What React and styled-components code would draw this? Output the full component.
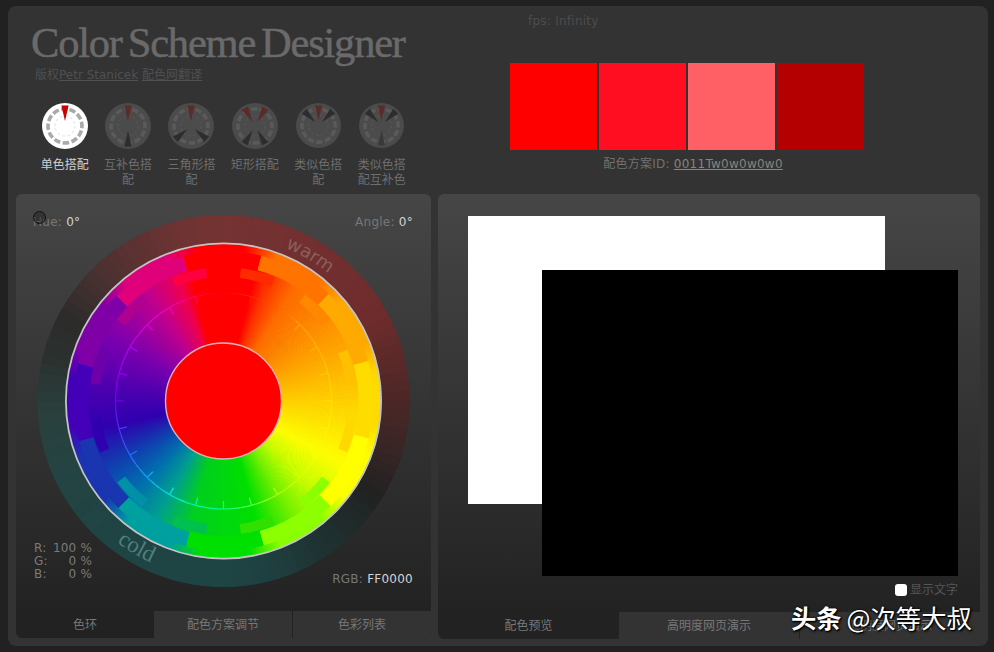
import React from "react";
import styled, { createGlobalStyle } from "styled-components";

const SANS = `"DejaVu Sans", "Noto Sans CJK SC", sans-serif`;

const Global = createGlobalStyle`
  html, body { margin: 0; padding: 0; background: #212121; }
  body { font-family: ${SANS}; font-size: 12px; }
  * { box-sizing: border-box; }
`;

const Frame = styled.div`
  width: 980px;
  height: 640px;
  margin: 6px 0 0 8px;
  background: #333;
  border-radius: 8px;
  display: flex;
  flex-direction: column;
  overflow: hidden;
`;
const Header = styled.header`
  height: 188px;
  display: flex;
  flex: none;
`;
const Brand = styled.div`
  width: 502px;
  padding: 14px 0 0 23px;
`;
const Title = styled.h1`
  margin: 0;
  font: 400 42.5px/46px "Liberation Serif", serif;
  letter-spacing: -1.2px;
  word-spacing: -3.5px;
  color: #6a6a6a;
  -webkit-text-stroke: 0.5px #6a6a6a;
  white-space: nowrap;
`;
const Credit = styled.div`
  margin: 1px 0 0 4px;
  line-height: 16px;
  color: #505050;
  white-space: nowrap;
`;
const CreditLink = styled.a`
  color: #505050;
  text-decoration: underline;
`;
const Schemes = styled.div`
  display: flex;
  margin: 20px 0 0 2px;
`;
const SchemeItem = styled.div`
  width: 63.4px;
  display: flex;
  flex-direction: column;
  align-items: center;
  color: ${(p) => (p.$active ? "#d0d0d0" : "#6e6e6e")};
`;
const SchemeLabel = styled.div`
  width: 50px;
  margin-top: ${(p) => (p.$small ? 10 : 9)}px;
  text-align: center;
  line-height: 15px;
`;
const Palette = styled.div`
  position: relative;
  flex: 1;
  padding-top: 57px;
`;
const Fps = styled.div`
  position: absolute;
  left: 18px;
  top: 8px;
  color: #4c4c4c;
  letter-spacing: 0.25px;
`;
const Swatches = styled.div`
  display: flex;
  gap: 2px;
`;
const Swatch = styled.div`
  width: 87px;
  height: 87px;
  background: ${(p) => p.$color};
`;
const SchemeId = styled.div`
  width: 366px;
  margin-top: 6px;
  text-align: center;
  line-height: 16px;
  color: #717171;
  letter-spacing: 0.25px;
`;
const IdLink = styled.a`
  color: #85857a;
  text-decoration: underline;
`;
const Main = styled.main`
  flex: 1;
  display: flex;
  gap: 7px;
  padding: 0 8px 7px;
`;
const Panel = styled.section`
  width: ${(p) => p.$width}px;
  height: ${(p) => p.$height}px;
  display: flex;
  flex-direction: column;
  border-radius: 6px;
  overflow: hidden;
  background: linear-gradient(#464646, #222 95%);
`;
const Stage = styled.div`
  position: relative;
  flex: 1;
`;
const WheelSvg = styled.svg`
  display: block;
  width: 400px;
  height: 400px;
  margin: 7px 0 0 7px;
`;
const Readout = styled.div`
  position: absolute;
  ${(p) => (p.$right ? `right: 18px;` : `left: 17px;`)}
  top: ${(p) => p.$top}px;
  line-height: 16px;
  color: #777;
  letter-spacing: 0.25px;
  white-space: nowrap;
`;
const Value = styled.span`
  color: #d4d4d4;
`;
const Rgb = styled.div`
  position: absolute;
  left: 18px;
  top: 348px;
  display: grid;
  grid-template-columns: 18px 40px;
  line-height: 13px;
  color: #7a7a7a;
  letter-spacing: 0.2px;
  white-space: nowrap;
`;
const RgbValue = styled.span`
  text-align: right;
`;
const Knob = styled.div`
  position: absolute;
  left: 17px;
  top: 17px;
  width: 13px;
  height: 13px;
  border-radius: 50%;
  border: 1.5px solid #111;
  background: rgba(30, 30, 30, 0.45);
`;
const Tabs = styled.nav`
  flex: none;
  height: 27px;
  display: flex;
`;
const Tab = styled.div`
  width: ${(p) => p.$width}px;
  background: ${(p) => (p.$active ? "transparent" : "#333")};
  border-left: ${(p) => (p.$divider ? "1px solid #222" : "none")};
  text-align: center;
  line-height: 28px;
  color: #777;
  white-space: nowrap;
`;
const PreviewStage = styled.div`
  position: relative;
  flex: 1;
  padding: 22px 0 0 30px;
`;
const WhiteSheet = styled.div`
  width: 417px;
  height: 288px;
  background: #fff;
`;
const BlackSheet = styled.div`
  position: absolute;
  left: 104px;
  top: 76px;
  width: 416px;
  height: 306px;
  background: #000;
`;
const TextToggle = styled.label`
  position: absolute;
  right: 22px;
  top: 387px;
  display: flex;
  align-items: center;
  gap: 3px;
  height: 18px;
  color: #565656;
  font-size: 12px;
`;
const ToggleText = styled.span`
  padding-bottom: 3px;
`;
const Check = styled.input`
  appearance: none;
  width: 12px;
  height: 12px;
  margin: 0;
  background: #fff;
  border-radius: 3px;
`;
const Watermark = styled.div`
  position: absolute;
  left: 791px;
  top: 599px;
  display: flex;
  gap: 5px;
  font: 400 25.3px/36px "Noto Sans CJK SC", sans-serif;
  color: #fff;
  white-space: nowrap;
  text-shadow: 1px 1px 1px #000, 1px 1px 3px #000, 0 0 2px #000;
`;
const Strong = styled.span`
  font-weight: 700;
`;

/* ---------- colour wheel data ---------- */
const hex = (s) => [parseInt(s.slice(0, 2), 16), parseInt(s.slice(2, 4), 16), parseInt(s.slice(4, 6), 16)];
const sample = (stops, a) => {
  const x = ((a % 360) + 360) % 360;
  for (let i = 0; i < stops.length - 1; i++) {
    const [a0, c0] = stops[i];
    const [a1, c1] = stops[i + 1];
    if (x >= a0 && x <= a1) {
      const t = (x - a0) / (a1 - a0 || 1);
      const p = hex(c0);
      const q = hex(c1);
      return `rgb(${p.map((v, k) => Math.round(v + (q[k] - v) * t)).join(",")})`;
    }
  }
  return `#${stops[0][1]}`;
};
const pt = (r, a) => {
  const t = (a * Math.PI) / 180;
  return [200.5 + r * Math.sin(t), 200 - r * Math.cos(t)];
};
const f = (n) => n.toFixed(2);
const sector = (r0, r1, a0, a1) => {
  const [x0, y0] = pt(r1, a0);
  const [x1, y1] = pt(r1, a1);
  const [x2, y2] = pt(r0, a1);
  const [x3, y3] = pt(r0, a0);
  return `M${f(x0)} ${f(y0)}A${r1} ${r1} 0 0 1 ${f(x1)} ${f(y1)}L${f(x2)} ${f(y2)}A${r0} ${r0} 0 0 0 ${f(x3)} ${f(y3)}Z`;
};
const arcLine = (r, a0, a1, sweep = 1) => {
  const [x0, y0] = pt(r, a0);
  const [x1, y1] = pt(r, a1);
  return `M${f(x0)} ${f(y0)}A${r} ${r} 0 0 ${sweep} ${f(x1)} ${f(y1)}`;
};
const range = (n, fn) => Array.from({ length: n }, (_, i) => fn(i));

const HUE = [
  [0, "ff0000"], [14, "ff0000"], [20, "ff3000"], [32, "ff6c00"], [60, "ff9c00"], [90, "ffd000"],
  [118, "ffff00"], [135, "c8ff00"], [150, "70f000"], [165, "00e000"], [195, "00d020"],
  [210, "00a090"], [225, "0070b0"], [240, "1040b0"], [258, "3000b0"], [275, "4a00b0"],
  [300, "7c00b0"], [325, "c00090"], [340, "f00050"], [346, "ff0000"], [360, "ff0000"],
];
const RING = [
  [0, "ff0000"], [15, "ff2000"], [45, "ffa000"], [90, "ffe000"], [120, "ffff00"], [150, "b0ff00"],
  [180, "00ff90"], [210, "00e8e0"], [235, "2080ff"], [270, "7000f0"], [300, "b800f0"], [325, "f000d0"],
  [345, "ff0060"], [360, "ff0000"],
];
const HALO = [
  [0, "753333"], [60, "702c2c"], [90, "4c2626"], [105, "3a2525"], [122, "222222"], [147, "1e3333"],
  [165, "1f4040"], [180, "1f4444"], [215, "1f4444"], [245, "234443"], [268, "2a3f3c"], [285, "2a302e"],
  [298, "2c2c2a"], [312, "443030"], [327, "5a3232"], [345, "6e3333"], [360, "753333"],
];
const BLOCKS = ["ff7400", "ffaa00", "ffdc00", "ffff00", "8cff00", "00e000", "00a0a0", "1a35b0", "4400b8", "8000a8", "e0007a"];
const NOTCHES = ["ff2a00", "ff8800", "ffc000", "ffd800", "8cff00", "30e000", "00c050", "0090a8", "3000b0", "6e00aa", "b00090", "ff0040"];
const RIM = [
  [0, "ff0000"], [8, "ff0000"],
  ...BLOCKS.flatMap((c, i) => [[20.5 + i * 30, c], [38.5 + i * 30, c]]),
  [351, "ff0000"], [360, "ff0000"],
];

const ColorWheel = () => (
  <WheelSvg viewBox="0 0 400 400">
    <defs>
      <path id="warm-arc" d={arcLine(165, 22, 80)} />
      <path id="cold-arc" d={arcLine(177, 217, 150, 0)} />
    </defs>
    {range(120, (i) => {
      const c = sample(HALO, i * 3 + 1.5);
      return <path key={i} d={sector(157, 185.6, i * 3, i * 3 + 3)} fill={c} stroke={c} strokeWidth="1" />;
    })}
    <text fontFamily="DejaVu Sans, sans-serif" fontSize="18" fill="#8a5f5a">
      <textPath href="#warm-arc">warm</textPath>
    </text>
    <text fontFamily="Liberation Serif, serif" fontSize="23" fill="#4f7f7f">
      <textPath href="#cold-arc">cold</textPath>
    </text>
    {range(360, (i) => {
      const c = sample(HUE, i + 0.5);
      return <path key={i} d={sector(57, 151, i, i + 1)} fill={c} stroke={c} strokeWidth="1" />;
    })}
    {range(360, (i) => {
      const c = sample(RIM, i + 0.5);
      return <path key={i} d={sector(150, 157.5, i, i + 1)} fill={c} stroke={c} strokeWidth="0.8" />;
    })}
    {BLOCKS.map((c, i) => (
      <path key={c + i} d={sector(135, 150, 14.5 + i * 30, 44.5 + i * 30)} fill={`#${c}`} />
    ))}
    <path d={sector(135, 150, -15.5, 14.5)} fill="#ff0000" />
    {NOTCHES.map((c, i) => (
      <path key={c + i} d={sector(124, 134, 7.5 + i * 30, 22.5 + i * 30)} fill={`#${c}`} />
    ))}
    {range(120, (i) => (
      <path key={i} d={arcLine(108, i * 3, i * 3 + 3)} fill="none" stroke={sample(RING, i * 3 + 1.5)} strokeWidth="1.2" />
    ))}
    {range(24, (i) => {
      const a = i * 15;
      const [x0, y0] = pt(108, a);
      const [x1, y1] = pt(100, a);
      return <line key={i} x1={x0} y1={y0} x2={x1} y2={y1} stroke={sample(RING, a)} strokeWidth="1.2" />;
    })}
    <circle cx="200.5" cy="200" r="157.6" fill="none" stroke="#c4c4c4" strokeWidth="1.8" />
    <circle cx="200.5" cy="200" r="58" fill="#ff0000" stroke="#e0b0b0" strokeWidth="1.4" />
  </WheelSvg>
);

/* ---------- scheme icons ---------- */
const IconSvg = styled.svg`
  display: block;
  flex: none;
  width: ${(p) => p.$size}px;
  height: ${(p) => p.$size}px;
`;
const ICON = { c: 23, tip: 5, base: 20.5, half: 3.6 };
const wedge = (a) => {
  const rot = (x, y) => {
    const t = (a * Math.PI) / 180;
    return `${f(ICON.c + x * Math.cos(t) - y * Math.sin(t))},${f(ICON.c + x * Math.sin(t) + y * Math.cos(t))}`;
  };
  return [rot(0, -ICON.tip), rot(-ICON.half, -ICON.base), rot(ICON.half, -ICON.base)].join(" ");
};
const SchemeIcon = ({ active, size, wedges }) => (
  <IconSvg $size={size} viewBox="0 0 46 46">
    <circle cx="23" cy="23" r="23" fill={active ? "#fff" : "#4b4b4b"} />
    <circle cx="23" cy="23" r="17" fill="none" stroke={active ? "#aaa" : "#5a5a5a"} strokeWidth="3.6" strokeDasharray="6.4 2.5" transform="rotate(-75 23 23)" />
    <circle cx="23" cy="23" r="10" fill="none" stroke={active ? "#ddd" : "#585858"} strokeWidth="1" strokeDasharray="2.7 2.5" />
    {wedges.map(([a, kind]) => (
      <polygon
        key={a}
        points={wedge(a)}
        fill={kind === "main" ? (active ? "#c80000" : "#5a2b28") : kind === "mute" ? "#393939" : "#2d2d2d"}
      />
    ))}
  </IconSvg>
);

const SCHEMES = [
  { label: "单色搭配", active: true, size: 46, wedges: [[0, "main"]] },
  { label: "互补色搭配", size: 46, wedges: [[0, "main"], [180, "dark"]] },
  { label: "三角形搭配", size: 46, wedges: [[0, "main"], [130, "dark"], [230, "dark"]] },
  { label: "矩形搭配", size: 46, wedges: [[-30, "main"], [30, "main"], [150, "dark"], [210, "dark"]] },
  { label: "类似色搭配", size: 45, small: true, wedges: [[0, "main"], [-45, "dark"], [45, "dark"]] },
  { label: "类似色搭配互补色", size: 45, small: true, wedges: [[0, "main"], [-45, "dark"], [45, "dark"], [180, "mute"]] },
];
const SWATCHES = ["#ff0000", "#ff0d20", "#ff6066", "#b40000"];

export default function App() {
  return (
    <>
      <Global />
      <Frame>
        <Header>
          <Brand>
            <Title>Color Scheme Designer</Title>
            <Credit>
              版权<CreditLink>Petr Stanicek</CreditLink> <CreditLink>配色网翻译</CreditLink>
            </Credit>
            <Schemes>
              {SCHEMES.map((s) => (
                <SchemeItem key={s.label} $active={s.active}>
                  <SchemeIcon active={s.active} size={s.size} wedges={s.wedges} />
                  <SchemeLabel $small={s.small}>{s.label}</SchemeLabel>
                </SchemeItem>
              ))}
            </Schemes>
          </Brand>
          <Palette>
            <Fps>fps: Infinity</Fps>
            <Swatches>
              {SWATCHES.map((c) => (
                <Swatch key={c} $color={c} />
              ))}
            </Swatches>
            <SchemeId>
              配色方案ID: <IdLink>0011Tw0w0w0w0</IdLink>
            </SchemeId>
          </Palette>
        </Header>
        <Main>
          <Panel $width={415} $height={444}>
            <Stage>
              <ColorWheel />
              <Readout $top={20}>
                Hue: <Value>0°</Value>
              </Readout>
              <Knob />
              <Readout $right $top={20}>
                Angle: <Value>0°</Value>
              </Readout>
              <Rgb>
                <span>R:</span>
                <RgbValue>100 %</RgbValue>
                <span>G:</span>
                <RgbValue>0 %</RgbValue>
                <span>B:</span>
                <RgbValue>0 %</RgbValue>
              </Rgb>
              <Readout $right $top={377}>
                RGB: <Value>FF0000</Value>
              </Readout>
            </Stage>
            <Tabs>
              <Tab $active $width={138}>色环</Tab>
              <Tab $width={138}>配色方案调节</Tab>
              <Tab $divider $width={139}>色彩列表</Tab>
            </Tabs>
          </Panel>
          <Panel $width={542} $height={445}>
            <PreviewStage>
              <WhiteSheet />
              <BlackSheet />
              <TextToggle>
                <Check type="checkbox" />
                <ToggleText>显示文字</ToggleText>
              </TextToggle>
            </PreviewStage>
            <Tabs>
              <Tab $active $width={181}>配色预览</Tab>
              <Tab $width={180}>高明度网页演示</Tab>
              <Tab $divider $width={181}>低明度网页演示</Tab>
            </Tabs>
          </Panel>
        </Main>
      </Frame>
      <Watermark>
        <Strong>头条</Strong>
        <span>@次等大叔</span>
      </Watermark>
    </>
  );
}
